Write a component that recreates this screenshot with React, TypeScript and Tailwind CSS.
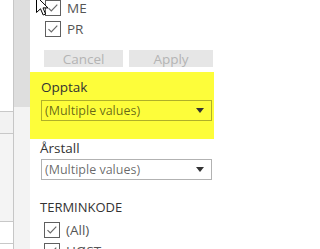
import React from "react"

const font = { fontFamily: '"Open Sans", "Noto Sans", Arial, sans-serif' }

function CheckBox() {
  return (
    <span className="flex size-4 shrink-0 items-center justify-center border border-[#5f5f5f] bg-white">
      <svg width="14" height="14" viewBox="0 0 14 14">
        <path d="M2.5 7.2 L5.3 10 L11.3 3.6" fill="none" stroke="#6a6a6a" strokeWidth="1.2" />
      </svg>
    </span>
  )
}

function CheckRow({ label, indent }: { label: string; indent: string }) {
  return (
    <div className={`flex h-4 items-center gap-[6px] ${indent}`}>
      <CheckBox />
      <span className="text-[13.5px] leading-4 text-[#555]">{label}</span>
    </div>
  )
}

function Dropdown({ value }: { value: string }) {
  return (
    <div className="ml-[11px] mr-[2px] flex h-[21px] items-center justify-between border border-black/30 pl-[3px] pr-[7px]">
      <span className="text-[12.5px] leading-4 text-black/60">{value}</span>
      <svg width="8" height="5" viewBox="0 0 8 5">
        <path d="M0 0 L8 0 L4 5 Z" fill="#333" />
      </svg>
    </div>
  )
}

function Cursor() {
  return (
    <svg className="absolute left-[6px] top-[-4px]" width="13" height="21" viewBox="0 0 13 21">
      <path
        d="M0.5 0.5 L0.5 16.5 L4.5 12.8 L7.2 19 L9.6 18 L7 11.9 L12 11.9 Z"
        fill="#fff"
        stroke="#000"
        strokeWidth="1"
        strokeLinejoin="miter"
      />
    </svg>
  )
}

export default function App() {
  return (
    <div className="flex h-[249px] w-[214px] overflow-hidden bg-white" style={font}>
      {/* neighbouring sheet column */}
      <div className="flex w-[13px] flex-col">
        <div className="h-[111px] bg-white" />
        <div className="h-[22px] border-t border-[#c8c8c8] bg-[#f2f2f2]" />
        <div className="h-[88px] border-t border-[#c8c8c8] bg-[#f4f4f4]" />
        <div className="h-[22px] border-t border-[#c8c8c8] bg-white" />
        <div className="flex-1 border-t border-[#c8c8c8] bg-white" />
      </div>
      <div className="flex w-[17px] flex-col border-l border-[#c6c6c6]">
        <div className="h-[107px] bg-[#dedede]" />
        <div className="flex-1 bg-[#f3f3f3]" />
      </div>

      {/* filter panel */}
      <div className="relative flex w-[184px] flex-col bg-white">
        <div className="flex flex-col gap-[5px]">
          <CheckRow label="ME" indent="pl-[15px]" />
          <CheckRow label="PR" indent="pl-[15px]" />
        </div>

        <div className="mt-[13px] flex gap-[6px] pl-[14px]">
          <button className="flex h-[17px] w-[79px] items-center justify-center bg-[#e6e6e6] text-[13.5px] leading-4 text-[#b4b4b4]">
            Cancel
          </button>
          <button className="flex h-[17px] w-[84px] items-center justify-center bg-[#e6e6e6] text-[13.5px] leading-4 text-[#b4b4b4]">
            Apply
          </button>
        </div>

        <div className="mt-[5px] bg-[#fdfd3a] pb-[18px] pt-[7px]">
          <div className="h-4 pl-[11px] text-[13.5px] leading-4 text-[#333]">Opptak</div>
          <div className="mt-[5px]">
            <Dropdown value="(Multiple values)" />
          </div>
        </div>

        <div className="mt-[1px] h-4 pl-[10px] text-[13.5px] leading-4 text-[#333]">Årstall</div>
        <div className="mt-[3px]">
          <Dropdown value="(Multiple values)" />
        </div>

        <div className="mt-[19px] h-4 pl-[10px] text-[13px] leading-4 text-[#333]">TERMINKODE</div>
        <div className="mt-[7px] flex flex-col gap-[5px]">
          <CheckRow label="(All)" indent="pl-[14px]" />
          <CheckRow label="HØST" indent="pl-[14px]" />
        </div>

        <Cursor />
      </div>
    </div>
  )
}
